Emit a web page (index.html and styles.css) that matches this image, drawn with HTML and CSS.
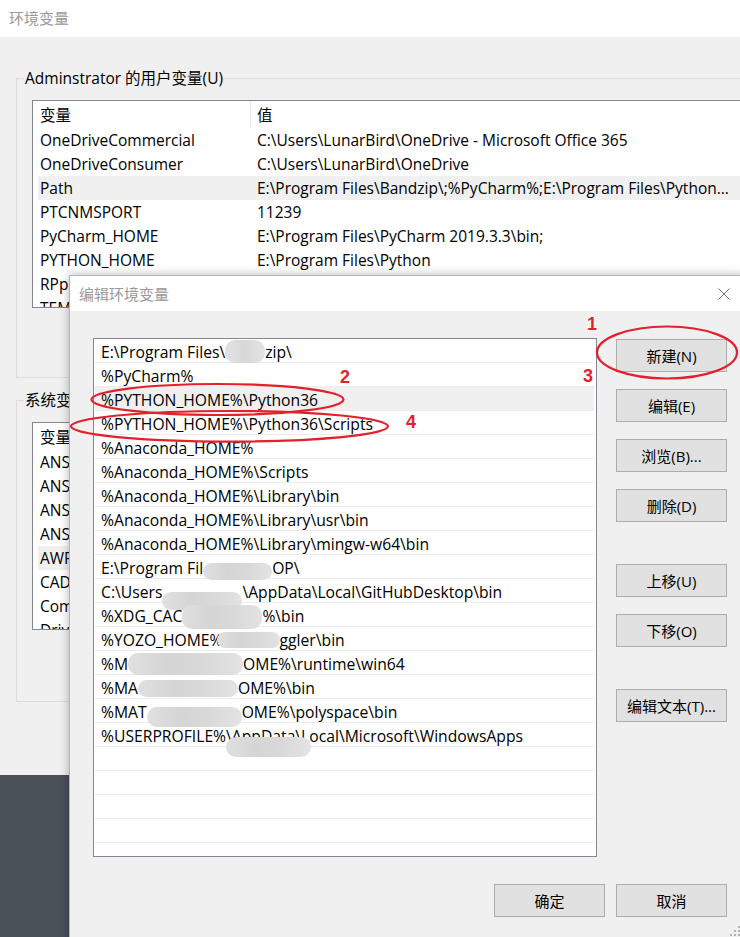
FILE: index.html
```html
<!DOCTYPE html>
<html lang="zh-CN">
<head>
<meta charset="utf-8">
<title>编辑环境变量</title>
<link rel="stylesheet" href="styles.css">
</head>
<body>
<div class="envwin">
  <div class="win-title">环境变量</div>
  <div class="win-body">
    <div class="group g-user">
      <div class="legend">Adminstrator 的用户变量(U)</div>
      <div class="listview">
        <div class="lv-head"><div class="c1">变量</div><div class="c2">值</div></div>
        <div class="lv-row"><div class="c1">OneDriveCommercial</div><div class="c2">C:\Users\LunarBird\OneDrive - Microsoft Office 365</div></div>
        <div class="lv-row"><div class="c1">OneDriveConsumer</div><div class="c2">C:\Users\LunarBird\OneDrive</div></div>
        <div class="lv-row sel"><div class="c1">Path</div><div class="c2">E:\Program Files\Bandzip\;%PyCharm%;E:\Program Files\Python...</div></div>
        <div class="lv-row"><div class="c1">PTCNMSPORT</div><div class="c2">11239</div></div>
        <div class="lv-row"><div class="c1">PyCharm_HOME</div><div class="c2">E:\Program Files\PyCharm 2019.3.3\bin;</div></div>
        <div class="lv-row"><div class="c1">PYTHON_HOME</div><div class="c2">E:\Program Files\Python</div></div>
        <div class="lv-row"><div class="c1">RPprofile</div><div class="c2">C:\RP</div></div>
        <div class="lv-row"><div class="c1">TEMP</div><div class="c2">C:\Temp</div></div>
      </div>
    </div>
    <div class="group g-sys">
      <div class="legend">系统变量(S)</div>
      <div class="listview">
        <div class="lv-head"><div class="c1">变量</div><div class="c2">值</div></div>
        <div class="lv-row"><div class="c1">ANSYS160_DIR</div></div>
        <div class="lv-row"><div class="c1">ANSYSLIC_DIR</div></div>
        <div class="lv-row"><div class="c1">ANSYS_SYSDIR</div></div>
        <div class="lv-row"><div class="c1">ANSYS_SYSDIR32</div></div>
        <div class="lv-row sel"><div class="c1">AWP_ROOT160</div></div>
        <div class="lv-row"><div class="c1">CADOO</div></div>
        <div class="lv-row"><div class="c1">ComSpec</div></div>
        <div class="lv-row"><div class="c1">DriverData</div></div>
      </div>
    </div>
  </div>
</div>

<div class="dialog">
  <div class="dlg-title">
    <span>编辑环境变量</span>
    <svg class="close" width="12" height="12" viewBox="0 0 12 12"><path d="M0.5 0.5L11.5 11.5M11.5 0.5L0.5 11.5" stroke="#707070" stroke-width="1" fill="none"/></svg>
  </div>
  <div class="dlg-body">
    <div class="dlg-main">
      <div class="pathlist">
        <div class="p-row">E:\Program Files\<span class="blob b1"></span>zip\</div>
        <div class="p-row">%PyCharm%</div>
        <div class="p-row sel">%PYTHON_HOME%\Python36</div>
        <div class="p-row">%PYTHON_HOME%\Python36\Scripts</div>
        <div class="p-row">%Anaconda_HOME%</div>
        <div class="p-row">%Anaconda_HOME%\Scripts</div>
        <div class="p-row">%Anaconda_HOME%\Library\bin</div>
        <div class="p-row">%Anaconda_HOME%\Library\usr\bin</div>
        <div class="p-row">%Anaconda_HOME%\Library\mingw-w64\bin</div>
        <div class="p-row">E:\Program Fil<span class="blob b10"></span>OP\</div>
        <div class="p-row">C:\Users<span class="blob b11"></span>\AppData\Local\GitHubDesktop\bin</div>
        <div class="p-row">%XDG_CAC<span class="blob b12"></span>%\bin</div>
        <div class="p-row">%YOZO_HOME%<span class="blob b13"></span>ggler\bin</div>
        <div class="p-row">%M<span class="blob b14"></span>OME%\runtime\win64</div>
        <div class="p-row">%MA<span class="blob b15"></span>OME%\bin</div>
        <div class="p-row">%MAT<span class="blob b16"></span>OME%\polyspace\bin</div>
        <div class="p-row">%USERPROFILE%<span class="blob b17"></span>\AppData\Local\Microsoft\WindowsApps</div>
        <div class="p-row"></div>
        <div class="p-row"></div>
        <div class="p-row"></div>
        <div class="p-row"></div>
        <div class="p-row"></div>
      </div>
      <div class="btns">
        <div class="btn">新建(N)</div>
        <div class="btn">编辑(E)</div>
        <div class="btn">浏览(B)...</div>
        <div class="btn">删除(D)</div>
        <div class="btn far">上移(U)</div>
        <div class="btn">下移(O)</div>
        <div class="btn far">编辑文本(T)...</div>
      </div>
    </div>
    <div class="dlg-foot">
      <div class="btn">确定</div>
      <div class="btn">取消</div>
    </div>
  </div>
</div>

<svg class="grip" width="12" height="13" viewBox="0 0 12 13">
  <g fill="#b4b4b4">
    <rect x="9" y="1" width="2" height="2"/>
    <rect x="9" y="5" width="2" height="2"/><rect x="5" y="5" width="2" height="2"/>
    <rect x="9" y="9" width="2" height="2"/><rect x="5" y="9" width="2" height="2"/><rect x="1" y="9" width="2" height="2"/>
  </g>
</svg>

<svg class="marks" width="740" height="937" viewBox="0 0 740 937">
  <g fill="none" stroke="#e3202b" stroke-width="2.2">
    <ellipse cx="667" cy="352.5" rx="70" ry="26"/>
    <ellipse cx="217.5" cy="399.5" rx="126" ry="15.5"/>
    <ellipse cx="229.5" cy="426.3" rx="158.5" ry="15.3"/>
  </g>
  <g class="num">
    <text x="587" y="330">1</text>
    <text x="340" y="383">2</text>
    <text x="583" y="382">3</text>
    <text x="406" y="428">4</text>
  </g>
</svg>
</body>
</html>
```

FILE: styles.css
```css
* { box-sizing: border-box; }
html, body { margin: 0; padding: 0; }
body {
  width: 740px;
  height: 937px;
  overflow: hidden;
  position: relative;
  background: #4a5158;
  font-family: "Open Sans", "Noto Sans CJK SC", sans-serif;
  font-size: 15.5px;
  color: #000;
}

/* background window */
.envwin { width: 740px; height: 775px; background: #f0f0f0; }
.win-title {
  height: 37px;
  background: #fff;
  line-height: 37px;
  padding-left: 9px;
  color: #999;
  font-size: 15px;
}
.win-body { padding: 41px 0 0 16px; }
.group {
  border: 1px solid #dcdcdc;
  border-right: none;
  padding-left: 15px;
}
.g-user { height: 300px; }
.g-sys { height: 302px; margin-top: 22px; }
.legend {
  display: table;
  margin: -12px 0 0 -8px;
  padding: 0 1px;
  background: #f0f0f0;
  line-height: 22px;
  white-space: nowrap;
}
.listview {
  margin-top: 11px;
  width: 760px;
  height: 208px;
  border: 1px solid #828790;
  background: #fff;
  overflow: hidden;
}
.lv-head, .lv-row { display: flex; margin-left: 5px; white-space: nowrap; }
.lv-head { height: 27px; line-height: 29px; }
.lv-head .c1 { border-right: 1px solid #e5e5e5; }
.lv-row { height: 24px; line-height: 24px; }
.c1 { width: 213px; flex: none; padding-left: 2px; }
.c2 { padding-left: 6px; }
.lv-row.sel { background: #f0f0f0; }

/* dialog window */
.dialog {
  position: absolute;
  left: 69px;
  top: 275px;
  width: 676px;
  height: 680px;
  border: 1px solid #b5b5b5;
  background: #f0f0f0;
  box-shadow: 0 0 9px rgba(0, 0, 0, 0.3);
  z-index: 2;
}
.dlg-title {
  height: 35px;
  background: #fff;
  display: flex;
  align-items: center;
  justify-content: space-between;
  padding-left: 9px;
  color: #999;
  font-size: 15px;
}
.close { margin-right: 14px; }
.dlg-body { padding: 27px 0 0 23px; }
.dlg-main { display: flex; gap: 19px; align-items: flex-start; }
.pathlist {
  width: 504px;
  height: 519px;
  flex: none;
  border: 1px solid #828790;
  background: #fff;
  padding: 0 2px 0 1px;
  overflow: hidden;
  font-size: 15.7px;
}
.p-row {
  height: 24px;
  padding: 2px 0 0 6px;
  line-height: 22px;
  border-bottom: 1px solid #ececec;
  white-space: nowrap;
}
.p-row.sel { background: #f0f0f0; }

.btns { display: flex; flex-direction: column; margin-top: 1px; }
.btn {
  width: 111px;
  height: 33px;
  border: 1px solid #adadad;
  background: #e1e1e1;
  display: flex;
  align-items: center;
  justify-content: center;
  font-size: 15px;
  white-space: nowrap;
}
.btns .btn + .btn { margin-top: 17px; }
.btns .btn.far { margin-top: 42px; }
.dlg-foot {
  display: flex;
  justify-content: flex-end;
  gap: 11px;
  width: 634px;
  margin-top: 27px;
}

/* smudges covering private parts of the paths */
.blob {
  display: inline-block;
  position: relative;
  z-index: 1;
  vertical-align: middle;
  margin-top: -12px;
  margin-bottom: -12px;
  border-radius: 10px;
  background: linear-gradient(90deg, #e0e0e0, #d5d5d5 35%, #d9d9d9 65%, #e3e3e3);
}
.b1 { width: 40px; height: 23px; top: -2px; background: linear-gradient(90deg, #e2e2e2, #d8d8d8 50%, rgba(222,222,222,0.85)); }
.b10 { width: 69px; height: 17px; top: 2px; }
.b11 { width: 80px; height: 18px; top: 7px; }
.b12 { width: 80px; height: 24px; top: -1px; }
.b13 { width: 63px; height: 16px; top: -2px; margin-left: -6px; }
.b14 { width: 115px; height: 22px; top: -2px; }
.b15 { width: 100px; height: 17px; top: -1px; }
.b16 { width: 95px; height: 20px; top: 3px; }
.b17 { width: 85px; height: 20px; top: 9px; margin-right: -85px; }

.grip { position: absolute; left: 729px; top: 925px; z-index: 3; }

/* red annotations drawn on top of the screenshot */
.marks { position: absolute; left: 0; top: 0; z-index: 5; pointer-events: none; }
.num text {
  font-family: "Liberation Sans", sans-serif;
  font-weight: bold;
  font-size: 18px;
  fill: #e3202b;
  stroke: #fff;
  stroke-width: 2px;
  paint-order: stroke;
}
```
